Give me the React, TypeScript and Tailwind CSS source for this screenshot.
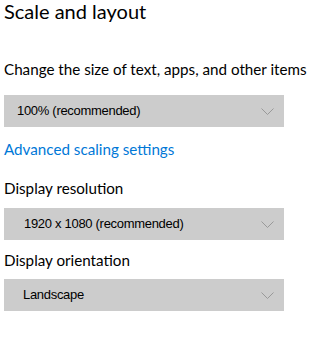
import React from 'react';

const uiFont = { fontFamily: 'Lato, "Noto Sans", sans-serif' };

function Chevron() {
  return (
    <svg width="13" height="7" viewBox="0 0 13 7" className="shrink-0">
      <polyline points="0.5,0.5 6.5,6.5 12.5,0.5" fill="none" stroke="#999999" strokeWidth="1" />
    </svg>
  );
}

function Dropdown({ value, indent }: { value: string; indent: string }) {
  return (
    <div className={`flex items-center justify-between w-[280px] h-[32px] bg-[#cccccc] pr-[10px] ${indent}`}>
      <span
        className="text-[13px] tracking-[-0.3px] text-black"
        style={{ fontFamily: '"Liberation Sans", Arial, sans-serif' }}
      >
        {value}
      </span>
      <Chevron />
    </div>
  );
}

export default function App() {
  return (
    <div className="w-[314px] h-[338px] bg-white pl-[4px] flex flex-col whitespace-nowrap" style={uiFont}>
      <h1 className="text-[20px] leading-[22px] text-black font-normal">Scale and layout</h1>

      <div className="mt-[37px] text-[15.2px] leading-[20px] text-black">
        Change the size of text, apps, and other items
      </div>
      <div className="mt-[16px]">
        <Dropdown value="100% (recommended)" indent="pl-[13px]" />
      </div>

      <a className="mt-[12px] text-[15.2px] leading-[20px] text-[#0078d7]">Advanced scaling settings</a>

      <div className="mt-[19px] text-[15.2px] leading-[20px] text-black">Display resolution</div>
      <div className="mt-[10px]">
        <Dropdown value="1920 x 1080 (recommended)" indent="pl-[20px]" />
      </div>

      <div className="mt-[10px] text-[15.2px] leading-[20px] text-black">Display orientation</div>
      <div className="mt-[9px]">
        <Dropdown value="Landscape" indent="pl-[19px]" />
      </div>
    </div>
  );
}
